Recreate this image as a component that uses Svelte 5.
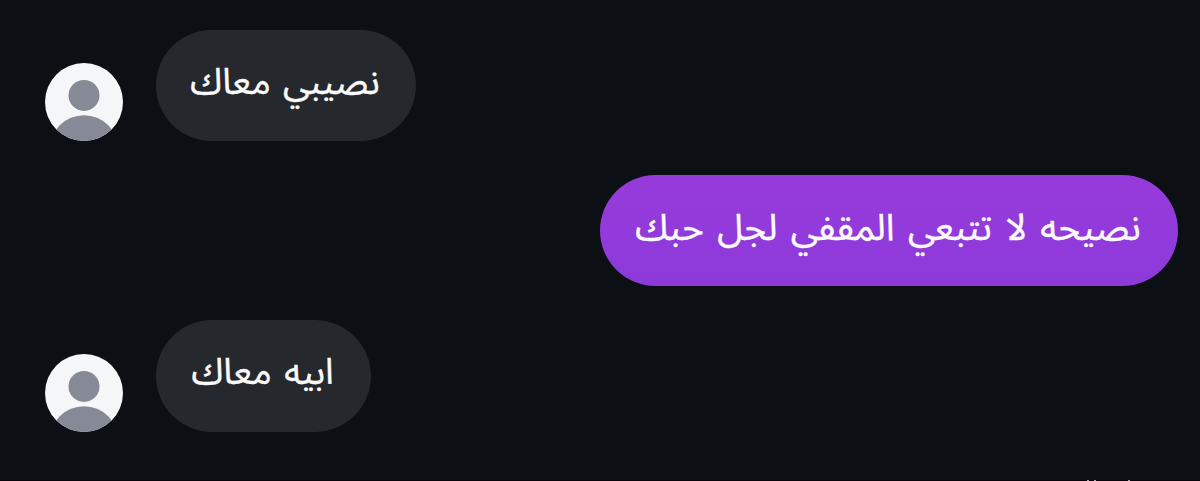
<script lang="ts">
	type Message = {
		text: string;
		mine: boolean;
		size: 'short' | 'long' | 'medium';
	};

	const messages: Message[] = [
		{ text: 'نصيبي معاك', mine: false, size: 'medium' },
		{ text: 'نصيحه لا تتبعي المقفي لجل حبك', mine: true, size: 'long' },
		{ text: 'ابيه معاك', mine: false, size: 'short' }
	];
</script>

{#snippet avatar()}
	<svg class="avatar" viewBox="0 0 78 78" aria-hidden="true">
		<defs>
			<clipPath id="avatar-clip"><circle cx="39" cy="39" r="39" /></clipPath>
		</defs>
		<circle cx="39" cy="39" r="39" fill="#f5f6f8" />
		<g fill="#858a96" clip-path="url(#avatar-clip)">
			<circle cx="39" cy="32.4" r="15.5" />
			<circle cx="39" cy="86.5" r="34.3" />
		</g>
	</svg>
{/snippet}

<main class="chat">
	{#each messages as message}
		<div class="row" class:mine={message.mine}>
			{#if !message.mine}
				{@render avatar()}
			{/if}
			<div class="bubble {message.size}">
				<span class="text" dir="rtl">{message.text}</span>
			</div>
		</div>
	{/each}
	<footer class="edge"><i></i><i></i><i></i></footer>
</main>

<style>
	:global(body) {
		background: #0c0f13;
	}

	.chat {
		box-sizing: border-box;
		height: 481px;
		padding: 30px 22px 0 45px;
		display: flex;
		flex-direction: column;
		gap: 33.7px;
		overflow: hidden;
		position: relative;
		font-family: 'Noto Sans Arabic', 'Noto Sans', 'DejaVu Sans', sans-serif;
	}

	.row {
		display: flex;
		align-items: flex-end;
		gap: 33px;
		height: 111.4px;
		flex: none;
	}

	.row.mine {
		justify-content: flex-end;
	}

	.avatar {
		width: 78px;
		height: 78px;
		flex: none;
	}

	.bubble {
		box-sizing: border-box;
		height: 100%;
		padding: 0 2px 5px 0;
		border-radius: 56px;
		background: #25282c;
		display: flex;
		align-items: center;
		justify-content: center;
	}

	.mine .bubble {
		background: linear-gradient(#983adb, #8d3adb);
	}

	.short {
		width: 215px;
	}

	.medium {
		width: 260px;
	}

	.long {
		width: 578px;
	}

	.text {
		color: #fafafa;
		font-size: 36.2px;
		line-height: 50px;
		word-spacing: 3px;
		white-space: nowrap;
		-webkit-text-stroke: 0.4px #fafafa;
	}

	.mine .text {
		font-size: 37px;
		word-spacing: 3.8px;
	}

	/* tips of the next line, cut off by the bottom of the view */
	.edge {
		position: absolute;
		left: 0;
		right: 0;
		bottom: 0;
		height: 1px;
		padding-left: 1087px;
		display: flex;
		background: #08030a;
	}

	.edge i {
		width: 2px;
		background: #aaa8ac;
		margin-right: 5px;
	}

	.edge i:last-child {
		margin-left: 27px;
	}
</style>
